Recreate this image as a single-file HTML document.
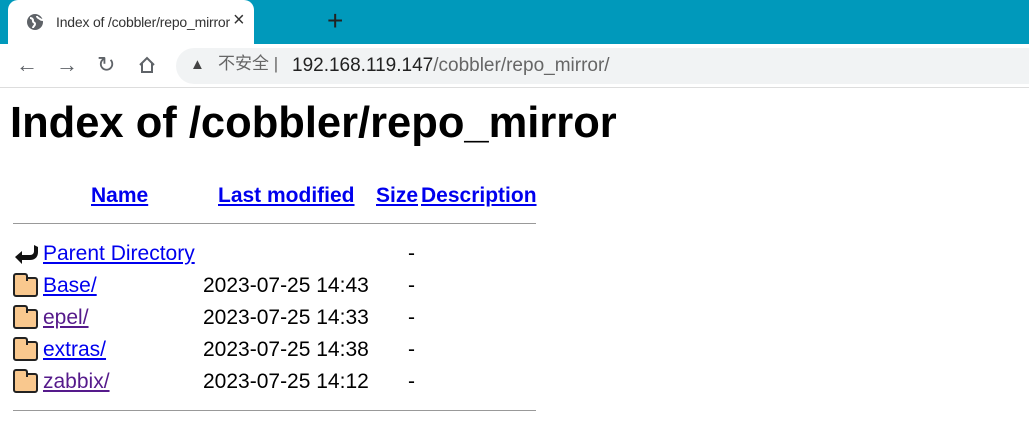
<!DOCTYPE html>
<html><head><meta charset="utf-8"><style>
*{margin:0;padding:0;box-sizing:border-box}
body{width:1029px;height:440px;overflow:hidden;background:#fff;font-family:"Liberation Sans","Noto Sans CJK SC",sans-serif;position:relative}
.a{position:absolute;white-space:nowrap}
a{color:#0000ee;text-decoration:underline}
a.v{color:#551a8b}
.h{font-weight:bold;font-size:21px}
.r{font-size:21px;color:#000;line-height:24px}
.hr{position:absolute;left:13px;width:523px;height:1px;background:#999}
.fold{position:absolute;left:13px;width:25px;height:20px;background:#f9c88e;border:2px solid #222;border-radius:3px}
.fold:before{content:"";position:absolute;left:-2px;top:-6px;width:11px;height:6px;background:#f9c88e;border:2px solid #222;border-bottom:none;border-radius:3px 3px 0 0}
</style></head><body>
<div class="a" style="left:0;top:0;width:1029px;height:44px;background:#0099bb"></div>
<div class="a" style="left:8px;top:0;width:246px;height:44px;background:#fff;border-radius:10px 10px 0 0"></div>
<svg class="a" style="left:25px;top:12px" width="20" height="20" viewBox="0 0 20 20"><circle cx="10" cy="10" r="8" fill="#5f6368"/><path d="M5 6c2 0 3 1 3 3s2 1 2 3-2 2-2 4M12 4c0 2 2 2 3 3s2 1 3 1" stroke="#fff" stroke-width="2" fill="none"/></svg>
<div class="a" style="left:56px;top:14px;font-size:14px;letter-spacing:-0.2px;color:#333">Index of /cobbler/repo_mirror</div>
<div class="a" style="left:233px;top:9px;font-size:20px;color:#333">×</div>
<div class="a" style="left:327px;top:5px;font-size:28px;color:#222">+</div>
<div class="a" style="left:0;top:44px;width:1029px;height:44px;background:#fff;border-bottom:1px solid #ddd"></div>
<div class="a" style="left:16px;top:52px;font-size:22px;color:#5f6368">←</div>
<div class="a" style="left:56px;top:52px;font-size:22px;color:#5f6368">→</div>
<div class="a" style="left:97px;top:52px;font-size:22px;color:#5f6368">↻</div>
<svg class="a" style="left:137px;top:55px" width="20" height="20" viewBox="0 0 20 20"><path d="M3 10L10 3l7 7M5 8v9h10V8" stroke="#5f6368" stroke-width="2" fill="none"/></svg>
<div class="a" style="left:176px;top:48px;width:870px;height:36px;background:#f1f3f4;border-radius:18px"></div>
<div class="a" style="left:190px;top:56px;font-size:15px;color:#444">▲</div>
<div class="a" style="left:218px;top:53px;font-size:17px;line-height:22px;color:#666">不安全 |</div>
<div class="a" style="left:292px;top:55px;font-size:19px;color:#222">192.168.119.147<span style="color:#666">/cobbler/repo_mirror/</span></div>
<div class="a" style="left:10px;top:99px;font-size:43.5px;font-weight:bold;color:#000">Index of /cobbler/repo_mirror</div>
<a class="a h" style="left:91px;top:184px">Name</a>
<a class="a h" style="left:218px;top:184px">Last modified</a>
<a class="a h" style="left:376px;top:184px">Size</a>
<a class="a h" style="left:421px;top:184px">Description</a>
<div class="hr" style="top:223px"></div>
<svg class="a" style="left:13px;top:242px" width="26" height="22" viewBox="0 0 26 22"><path d="M2 15l7-6v4h8c3 0 4-2 4-4V3l4 2v5c0 5-3 8-8 8H9v4z" fill="#111"/></svg>
<a class="a r" style="left:43px;top:242px;color:#0000ee">Parent Directory</a>
<div class="a r" style="left:408px;top:242px">-</div>
<div class="fold" style="top:277px"></div><a class="a r" style="left:43px;top:274px;color:#0000ee">Base/</a><div class="a r" style="left:203px;top:274px">2023-07-25 14:43</div><div class="a r" style="left:408px;top:274px">-</div>
<div class="fold" style="top:309px"></div><a class="a r v" style="left:43px;top:306px">epel/</a><div class="a r" style="left:203px;top:306px">2023-07-25 14:33</div><div class="a r" style="left:408px;top:306px">-</div>
<div class="fold" style="top:341px"></div><a class="a r" style="left:43px;top:338px;color:#0000ee">extras/</a><div class="a r" style="left:203px;top:338px">2023-07-25 14:38</div><div class="a r" style="left:408px;top:338px">-</div>
<div class="fold" style="top:373px"></div><a class="a r v" style="left:43px;top:370px">zabbix/</a><div class="a r" style="left:203px;top:370px">2023-07-25 14:12</div><div class="a r" style="left:408px;top:370px">-</div>
<div class="hr" style="top:410px"></div>
</body></html>
